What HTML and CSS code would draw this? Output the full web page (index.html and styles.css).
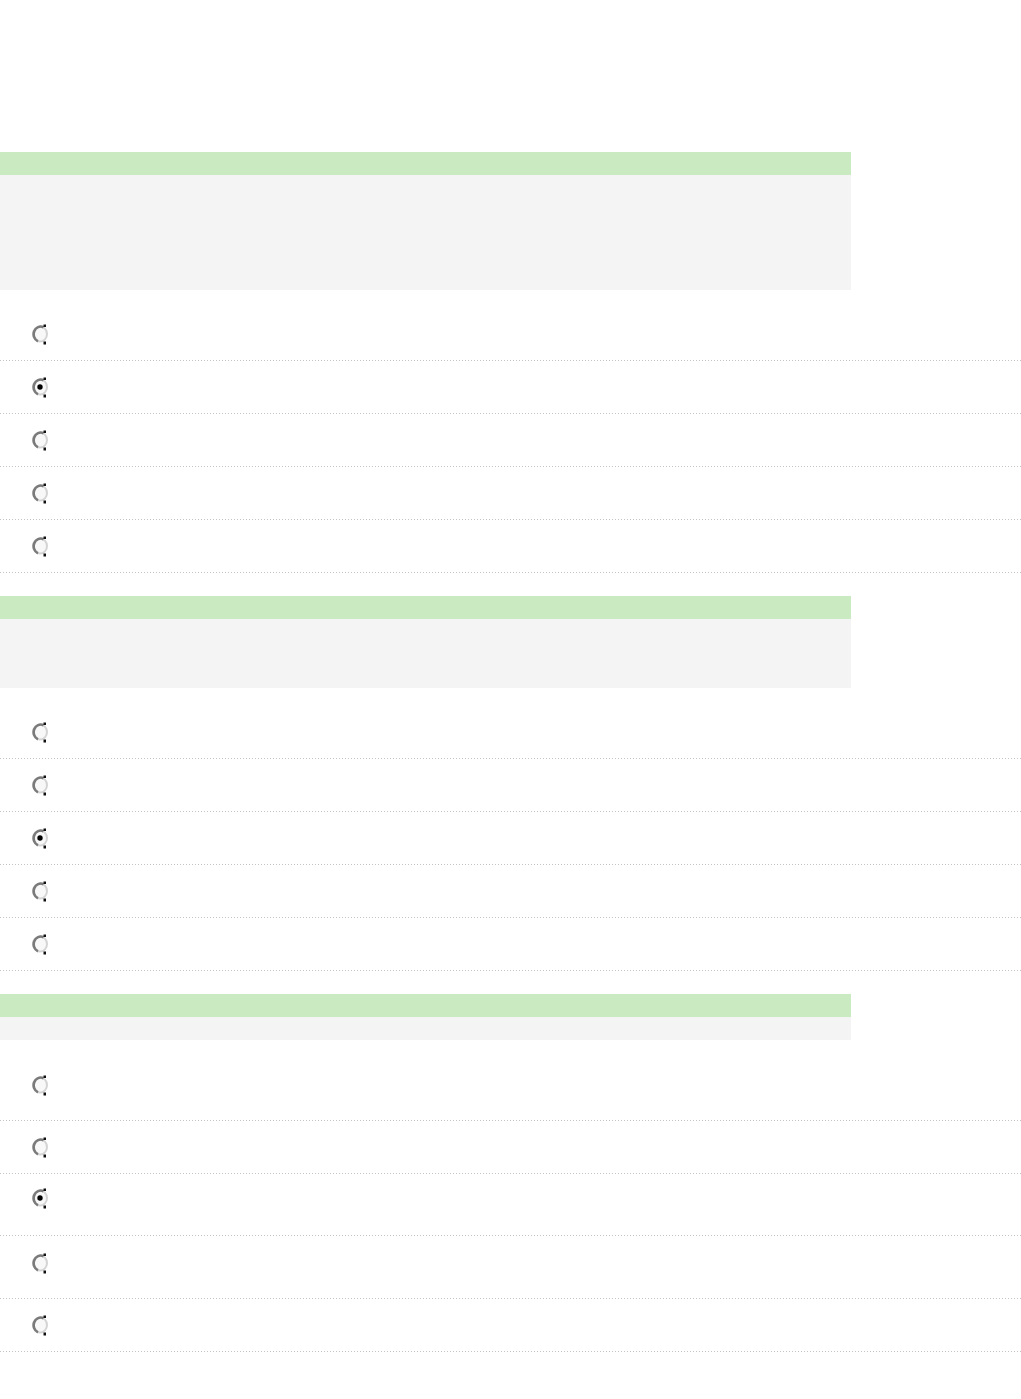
FILE: index.html
```html
<!DOCTYPE html>
<html>
<head>
<meta charset="utf-8">
<link rel="stylesheet" href="styles.css">
</head>
<body>
<main class="quiz">
  <section class="question">
    <div class="q-head"></div>
    <div class="q-body q-body--lg"></div>
    <ul class="answers">
      <li class="answer"><svg class="radio" width="18" height="22" viewBox="0 0 18 22"><ellipse cx="8" cy="11" rx="7" ry="7.6" fill="#f8f8f8" stroke="#d4d4d4" stroke-width="2"/><path d="M11.5 4.2 A7 7.6 0 1 0 6 18.3" fill="none" stroke="#7a7a7a" stroke-width="2.6"/><rect x="11.5" y="1.5" width="2.5" height="2.5" fill="#111"/><rect x="11.5" y="18.5" width="2.5" height="3" fill="#111"/></svg></li>
      <li class="answer"><svg class="radio" width="18" height="22" viewBox="0 0 18 22"><ellipse cx="8" cy="11" rx="7" ry="7.6" fill="#f8f8f8" stroke="#d4d4d4" stroke-width="2"/><path d="M11.5 4.2 A7 7.6 0 1 0 6 18.3" fill="none" stroke="#7a7a7a" stroke-width="2.6"/><rect x="11.5" y="1.5" width="2.5" height="2.5" fill="#111"/><rect x="11.5" y="18.5" width="2.5" height="3" fill="#111"/><circle cx="8" cy="11" r="2.7" fill="#000"/></svg></li>
      <li class="answer"><svg class="radio" width="18" height="22" viewBox="0 0 18 22"><ellipse cx="8" cy="11" rx="7" ry="7.6" fill="#f8f8f8" stroke="#d4d4d4" stroke-width="2"/><path d="M11.5 4.2 A7 7.6 0 1 0 6 18.3" fill="none" stroke="#7a7a7a" stroke-width="2.6"/><rect x="11.5" y="1.5" width="2.5" height="2.5" fill="#111"/><rect x="11.5" y="18.5" width="2.5" height="3" fill="#111"/></svg></li>
      <li class="answer"><svg class="radio" width="18" height="22" viewBox="0 0 18 22"><ellipse cx="8" cy="11" rx="7" ry="7.6" fill="#f8f8f8" stroke="#d4d4d4" stroke-width="2"/><path d="M11.5 4.2 A7 7.6 0 1 0 6 18.3" fill="none" stroke="#7a7a7a" stroke-width="2.6"/><rect x="11.5" y="1.5" width="2.5" height="2.5" fill="#111"/><rect x="11.5" y="18.5" width="2.5" height="3" fill="#111"/></svg></li>
      <li class="answer"><svg class="radio" width="18" height="22" viewBox="0 0 18 22"><ellipse cx="8" cy="11" rx="7" ry="7.6" fill="#f8f8f8" stroke="#d4d4d4" stroke-width="2"/><path d="M11.5 4.2 A7 7.6 0 1 0 6 18.3" fill="none" stroke="#7a7a7a" stroke-width="2.6"/><rect x="11.5" y="1.5" width="2.5" height="2.5" fill="#111"/><rect x="11.5" y="18.5" width="2.5" height="3" fill="#111"/></svg></li>
    </ul>
  </section>

  <section class="question">
    <div class="q-head"></div>
    <div class="q-body q-body--md"></div>
    <ul class="answers">
      <li class="answer"><svg class="radio" width="18" height="22" viewBox="0 0 18 22"><ellipse cx="8" cy="11" rx="7" ry="7.6" fill="#f8f8f8" stroke="#d4d4d4" stroke-width="2"/><path d="M11.5 4.2 A7 7.6 0 1 0 6 18.3" fill="none" stroke="#7a7a7a" stroke-width="2.6"/><rect x="11.5" y="1.5" width="2.5" height="2.5" fill="#111"/><rect x="11.5" y="18.5" width="2.5" height="3" fill="#111"/></svg></li>
      <li class="answer"><svg class="radio" width="18" height="22" viewBox="0 0 18 22"><ellipse cx="8" cy="11" rx="7" ry="7.6" fill="#f8f8f8" stroke="#d4d4d4" stroke-width="2"/><path d="M11.5 4.2 A7 7.6 0 1 0 6 18.3" fill="none" stroke="#7a7a7a" stroke-width="2.6"/><rect x="11.5" y="1.5" width="2.5" height="2.5" fill="#111"/><rect x="11.5" y="18.5" width="2.5" height="3" fill="#111"/></svg></li>
      <li class="answer"><svg class="radio" width="18" height="22" viewBox="0 0 18 22"><ellipse cx="8" cy="11" rx="7" ry="7.6" fill="#f8f8f8" stroke="#d4d4d4" stroke-width="2"/><path d="M11.5 4.2 A7 7.6 0 1 0 6 18.3" fill="none" stroke="#7a7a7a" stroke-width="2.6"/><rect x="11.5" y="1.5" width="2.5" height="2.5" fill="#111"/><rect x="11.5" y="18.5" width="2.5" height="3" fill="#111"/><circle cx="8" cy="11" r="2.7" fill="#000"/></svg></li>
      <li class="answer"><svg class="radio" width="18" height="22" viewBox="0 0 18 22"><ellipse cx="8" cy="11" rx="7" ry="7.6" fill="#f8f8f8" stroke="#d4d4d4" stroke-width="2"/><path d="M11.5 4.2 A7 7.6 0 1 0 6 18.3" fill="none" stroke="#7a7a7a" stroke-width="2.6"/><rect x="11.5" y="1.5" width="2.5" height="2.5" fill="#111"/><rect x="11.5" y="18.5" width="2.5" height="3" fill="#111"/></svg></li>
      <li class="answer"><svg class="radio" width="18" height="22" viewBox="0 0 18 22"><ellipse cx="8" cy="11" rx="7" ry="7.6" fill="#f8f8f8" stroke="#d4d4d4" stroke-width="2"/><path d="M11.5 4.2 A7 7.6 0 1 0 6 18.3" fill="none" stroke="#7a7a7a" stroke-width="2.6"/><rect x="11.5" y="1.5" width="2.5" height="2.5" fill="#111"/><rect x="11.5" y="18.5" width="2.5" height="3" fill="#111"/></svg></li>
    </ul>
  </section>

  <section class="question">
    <div class="q-head"></div>
    <div class="q-body q-body--sm"></div>
    <ul class="answers">
      <li class="answer answer--tall"><svg class="radio" width="18" height="22" viewBox="0 0 18 22"><ellipse cx="8" cy="11" rx="7" ry="7.6" fill="#f8f8f8" stroke="#d4d4d4" stroke-width="2"/><path d="M11.5 4.2 A7 7.6 0 1 0 6 18.3" fill="none" stroke="#7a7a7a" stroke-width="2.6"/><rect x="11.5" y="1.5" width="2.5" height="2.5" fill="#111"/><rect x="11.5" y="18.5" width="2.5" height="3" fill="#111"/></svg></li>
      <li class="answer"><svg class="radio" width="18" height="22" viewBox="0 0 18 22"><ellipse cx="8" cy="11" rx="7" ry="7.6" fill="#f8f8f8" stroke="#d4d4d4" stroke-width="2"/><path d="M11.5 4.2 A7 7.6 0 1 0 6 18.3" fill="none" stroke="#7a7a7a" stroke-width="2.6"/><rect x="11.5" y="1.5" width="2.5" height="2.5" fill="#111"/><rect x="11.5" y="18.5" width="2.5" height="3" fill="#111"/></svg></li>
      <li class="answer answer--tall2"><svg class="radio" width="18" height="22" viewBox="0 0 18 22"><ellipse cx="8" cy="11" rx="7" ry="7.6" fill="#f8f8f8" stroke="#d4d4d4" stroke-width="2"/><path d="M11.5 4.2 A7 7.6 0 1 0 6 18.3" fill="none" stroke="#7a7a7a" stroke-width="2.6"/><rect x="11.5" y="1.5" width="2.5" height="2.5" fill="#111"/><rect x="11.5" y="18.5" width="2.5" height="3" fill="#111"/><circle cx="8" cy="11" r="2.7" fill="#000"/></svg></li>
      <li class="answer answer--tall"><svg class="radio" width="18" height="22" viewBox="0 0 18 22"><ellipse cx="8" cy="11" rx="7" ry="7.6" fill="#f8f8f8" stroke="#d4d4d4" stroke-width="2"/><path d="M11.5 4.2 A7 7.6 0 1 0 6 18.3" fill="none" stroke="#7a7a7a" stroke-width="2.6"/><rect x="11.5" y="1.5" width="2.5" height="2.5" fill="#111"/><rect x="11.5" y="18.5" width="2.5" height="3" fill="#111"/></svg></li>
      <li class="answer"><svg class="radio" width="18" height="22" viewBox="0 0 18 22"><ellipse cx="8" cy="11" rx="7" ry="7.6" fill="#f8f8f8" stroke="#d4d4d4" stroke-width="2"/><path d="M11.5 4.2 A7 7.6 0 1 0 6 18.3" fill="none" stroke="#7a7a7a" stroke-width="2.6"/><rect x="11.5" y="1.5" width="2.5" height="2.5" fill="#111"/><rect x="11.5" y="18.5" width="2.5" height="3" fill="#111"/></svg></li>
    </ul>
  </section>
</main>
</body>
</html>
```
FILE: styles.css
```css
html, body {
  margin: 0;
  padding: 0;
  background: #ffffff;
  font-family: "Liberation Sans", Arial, sans-serif;
}

.quiz {
  padding-top: 152px;
  display: flex;
  flex-direction: column;
  gap: 23px;
}

.question {
  display: flex;
  flex-direction: column;
}

.q-head {
  width: 851px;
  height: 23px;
  background: #caeac1;
}

.q-body {
  width: 851px;
  background: #f4f4f4;
}

.q-body--lg { height: 115px; }
.q-body--md { height: 69px; }
.q-body--sm { height: 23px; }

.answers {
  list-style: none;
  margin: 18px 0 0 0;
  padding: 0;
}

.answer {
  box-sizing: border-box;
  height: 53px;
  padding: 15px 0 0 32px;
  background-image: linear-gradient(to right, #c4c4c4 1px, transparent 1px);
  background-size: 3px 1px;
  background-repeat: repeat-x;
  background-position: 0 100%;
}

.answer--tall { height: 63px; padding-top: 16px; }
.answer--tall2 { height: 62px; padding-top: 13px; }

.radio {
  display: block;
}
```
